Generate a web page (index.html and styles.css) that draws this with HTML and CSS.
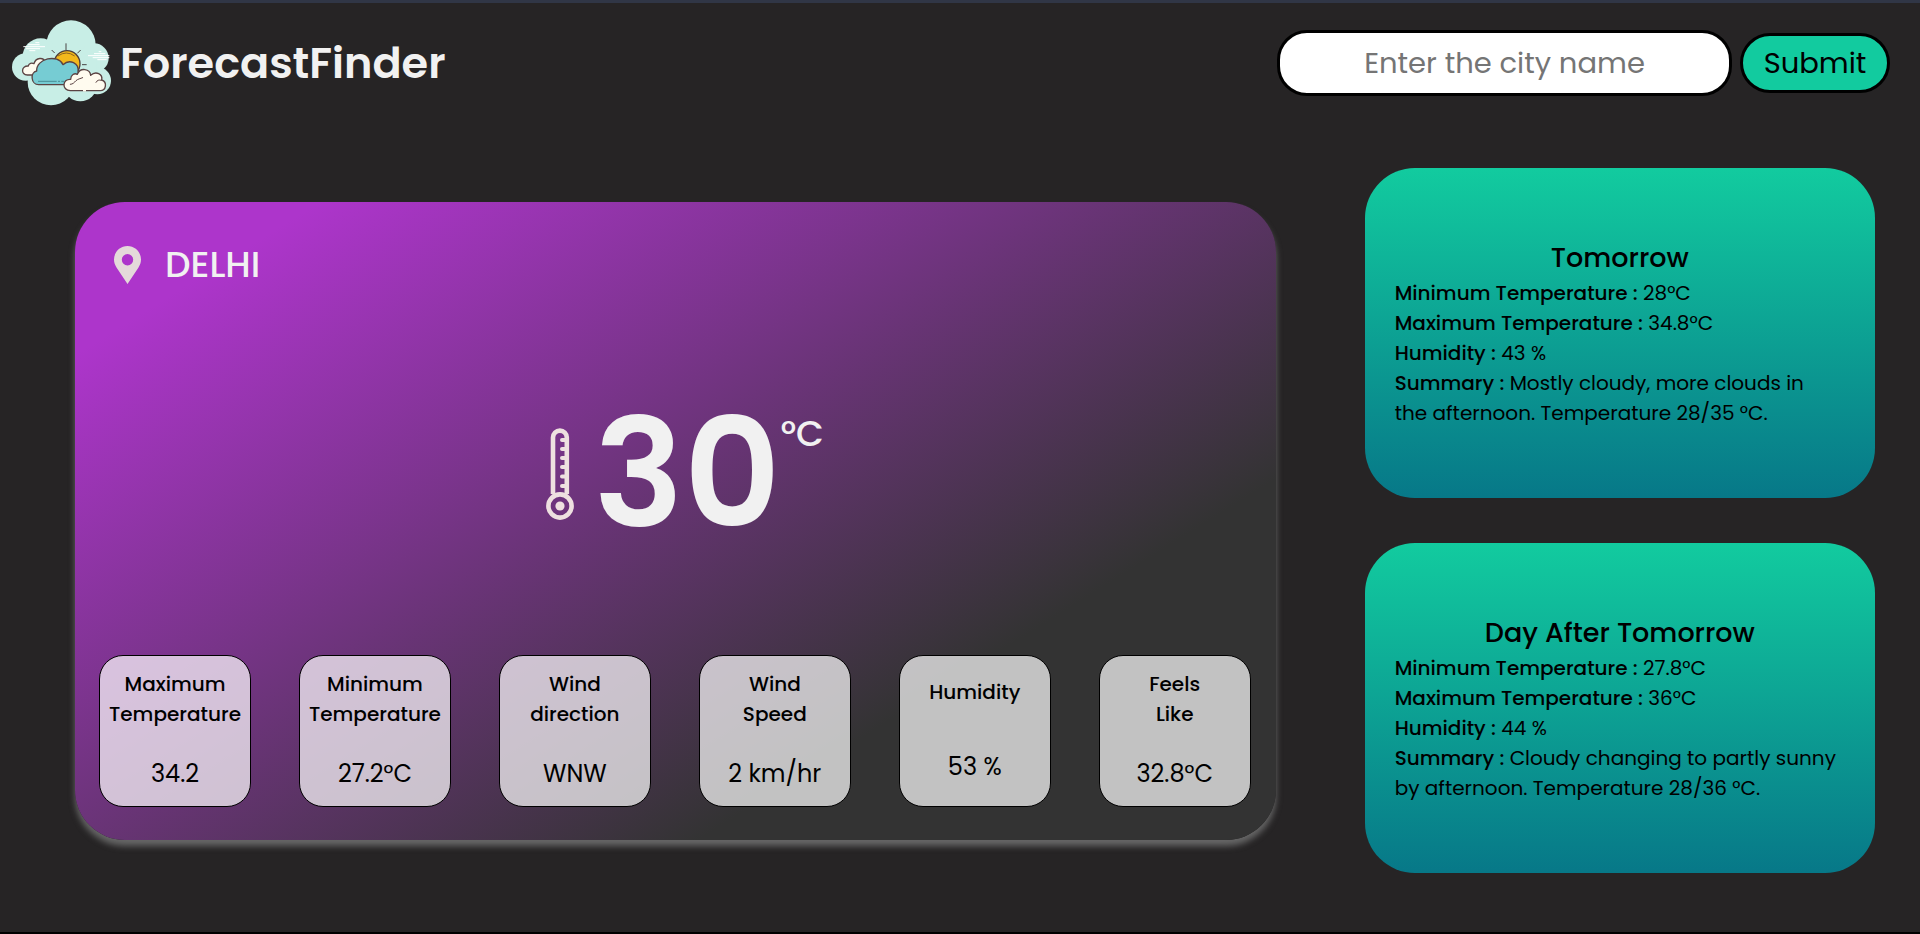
FILE: index.html
```html
<!DOCTYPE html>
<html lang="en">
<head>
<meta charset="utf-8">
<meta name="viewport" content="width=device-width, initial-scale=1">
<title>ForecastFinder</title>
<link rel="stylesheet" href="styles.css">
</head>
<body>
<header class="header">
  <div class="brand">
    <svg class="logo" viewBox="36 59 300 255" aria-hidden="true">
      <g fill="#c8eee6">
        <circle cx="213" cy="131" r="74"/>
        <circle cx="122" cy="165" r="54"/>
        <circle cx="77" cy="197" r="41"/>
        <circle cx="153" cy="242" r="70"/>
        <circle cx="241" cy="250" r="50"/>
        <circle cx="282" cy="170" r="44"/>
        <circle cx="292" cy="238" r="41"/>
        <path d="M90 150h200v100H90z"/>
      </g>
      <path d="M198 126v20M155 146l9 9M242 146l-10 10M246 190h14" stroke="#4a4545" stroke-width="3" fill="none"/>
      <circle cx="201" cy="187" r="39" fill="#f2b81c" stroke="#4d3c3a" stroke-width="4"/>
      <path d="M174 164q25-18 50 0" fill="none" stroke="#8c6420" stroke-width="3"/>
      <g stroke="#5b4343" stroke-width="4" stroke-linejoin="round" stroke-linecap="round">
        <path d="M82 221c-20 0-19-28 3-27 1-9 11-10 17-7 6-20 29-20 34-4v38z" fill="#fffbef"/>
        <path d="M116 250c-24 0-26-38-6-41-2-38 64-52 79-19 20-18 49-5 45 22 12 12 4 38-14 38z" fill="#76ccd3"/>
        <path d="M211 268c-26 0-25-36 1-34 0-14 12-20 20-15 9-22 38-17 40 3 16-15 37-3 33 14 18 6 13 32-4 32z" fill="#fffbef"/>
        <path d="M211 249c8 0 12-6 17-11s13-6 20-9M288 243q5-10 16-6" fill="none" stroke-width="3"/>
      </g>
      <path d="M114 240h56M174 240h6M184 240h8" stroke="#478c94" stroke-width="3"/>
      <path d="M249 268h9" stroke="#fffbef" stroke-width="5"/>
      <path d="M70 136h65M84 130h35M78 142h42M106 124h12M88 148h18M264 163h64M282 157h34M278 169h50M296 151h8M292 175h28" stroke="#fff" stroke-width="3"/>
    </svg>
    <h1 class="brand-name">ForecastFinder</h1>
  </div>
  <form class="search">
    <input class="search-input" type="text" placeholder="Enter the city name" aria-label="City name">
    <button class="search-button" type="submit">Submit</button>
  </form>
</header>

<main class="dashboard">
  <section class="current">
    <div class="location">
      <svg class="pin" viewBox="0 0 27 38" aria-hidden="true">
        <path fill-rule="evenodd" d="M13.500 0C6 0 0 6 0 13.500c0 3 1 5.500 2.500 8L13.500 38l11-16.500c1.500-2.500 2.500-5 2.500-8C27 6 21 0 13.500 0zm0 8a5.700 5.700 0 1 1 0 11.400 5.700 5.700 0 0 1 0-11.400z" fill="#e4d9da"/>
      </svg>
      <h2 class="city">DELHI</h2>
    </div>
    <div class="temperature">
      <svg class="thermometer" viewBox="0 0 28 92" aria-hidden="true">
        <g fill="none" stroke="#eee0e0" stroke-width="4.600">
          <path d="M7 66V9.500a6.900 6.900 0 0 1 13.800 0V66"/>
          <circle cx="14" cy="78" r="11.600"/>
          <path d="M21 12h-5M21 21h-5M21 30h-5M21 39h-5M21 48.500h-5M21 58h-5" stroke-linecap="round" stroke-width="4"/>
        </g>
        <circle cx="14" cy="78" r="4.600" fill="#eee0e0"/>
      </svg>
      <span class="degrees">30</span>
      <span class="unit">°C</span>
    </div>
    <dl class="stats">
      <div class="stat"><dt>Maximum Temperature</dt><dd>34.2</dd></div>
      <div class="stat"><dt>Minimum Temperature</dt><dd>27.2°C</dd></div>
      <div class="stat"><dt>Wind<br>direction</dt><dd>WNW</dd></div>
      <div class="stat"><dt>Wind<br>Speed</dt><dd>2 km/hr</dd></div>
      <div class="stat"><dt>Humidity</dt><dd>53 %</dd></div>
      <div class="stat"><dt>Feels<br>Like</dt><dd>32.8°C</dd></div>
    </dl>
  </section>

  <aside class="forecast">
    <section class="day">
      <h2 class="day-title">Tomorrow</h2>
      <p><b>Minimum Temperature :</b> 28°C</p>
      <p><b>Maximum Temperature :</b> 34.8°C</p>
      <p><b>Humidity :</b> 43 %</p>
      <p><b>Summary :</b> Mostly cloudy, more clouds in the afternoon. Temperature 28/35 °C.</p>
    </section>
    <section class="day">
      <h2 class="day-title">Day After Tomorrow</h2>
      <p><b>Minimum Temperature :</b> 27.8°C</p>
      <p><b>Maximum Temperature :</b> 36°C</p>
      <p><b>Humidity :</b> 44 %</p>
      <p><b>Summary :</b> Cloudy changing to partly sunny by afternoon. Temperature 28/36 °C.</p>
    </section>
  </aside>
</main>
</body>
</html>
```
FILE: styles.css
```css
* {
  box-sizing: border-box;
  margin: 0;
  padding: 0;
}

body {
  display: flex;
  flex-direction: column;
  min-height: 100vh;
  border-top: 3px solid #303646;
  border-bottom: 2px solid #000;
  background: #262425;
  color: #000;
  font-family: Poppins, Inter, "Open Sans", sans-serif;
  font-size: 20px;
  line-height: 30px;
}

.header {
  display: flex;
  align-items: center;
  justify-content: space-between;
  height: 120px;
  padding: 0 30px 0 12px;
}

.brand {
  display: flex;
  align-items: center;
  gap: 8px;
}

.logo {
  width: 100px;
  height: 85px;
  overflow: visible;
}

.brand-name {
  color: #f1f1f1;
  font-size: 43px;
  font-weight: 600;
  line-height: 66px;
}

.search {
  display: flex;
  align-items: center;
  gap: 8px;
}

.search-input,
.search-button {
  border: 3px solid #000;
  border-radius: 30px;
  font-family: inherit;
  font-size: 29px;
  font-weight: 400;
  text-align: center;
}

.search-input {
  width: 455px;
  height: 66px;
  background: #fff;
}

.search-input::placeholder {
  color: #757575;
}

.search-button {
  width: 150px;
  height: 60px;
  background: #12cb9f;
  color: #000;
}

.dashboard {
  display: grid;
  flex: 1;
  grid-template-columns: 40fr 17fr;
  align-items: center;
  gap: 89px;
  padding: 0 45px 14px 75px;
}

.current {
  display: flex;
  flex-direction: column;
  min-height: 638px;
  padding: 38px 25px 33px 24px;
  border-radius: 50px;
  background: linear-gradient(148deg, #ad35cb 11%, #333 74%);
  box-shadow: 0 6px 6px #666;
}

.location {
  display: flex;
  align-items: center;
  gap: 24px;
  padding-left: 15px;
}

.pin {
  width: 27px;
  height: 38px;
}

.city {
  color: #f1f1f1;
  font-size: 36px;
  font-weight: 500;
  line-height: 50px;
}

.temperature {
  display: flex;
  flex: 1;
  align-items: center;
  justify-content: center;
  padding: 4px 0 0 20px;
  color: #f1f1f1;
}

.thermometer {
  width: 28px;
  height: 92px;
  margin-right: 20px;
}

.degrees {
  font-size: 150px;
  font-weight: 600;
  line-height: 160px;
}

.unit {
  padding-bottom: 80px;
  font-size: 36px;
  font-weight: 500;
}

.stats {
  display: flex;
  justify-content: space-between;
}

.stat {
  display: flex;
  flex-direction: column;
  justify-content: space-around;
  width: 152px;
  height: 152px;
  border: 1px solid #000;
  border-radius: 24px;
  background: rgba(255, 255, 255, 0.7);
  text-align: center;
}

.stat dt {
  font-weight: 500;
}

.stat dd {
  font-size: 24px;
  line-height: 36px;
}

.forecast {
  display: grid;
  gap: 45px;
}

.day {
  display: flex;
  flex-direction: column;
  justify-content: center;
  min-height: 330px;
  padding: 0 30px;
  border-radius: 50px;
  background: linear-gradient(#12cb9f, #077888);
}

.day p {
  padding-right: 8px;
}

.day-title {
  font-size: 27px;
  font-weight: 500;
  line-height: 40px;
  text-align: center;
}

.day b {
  font-weight: 500;
}
```
